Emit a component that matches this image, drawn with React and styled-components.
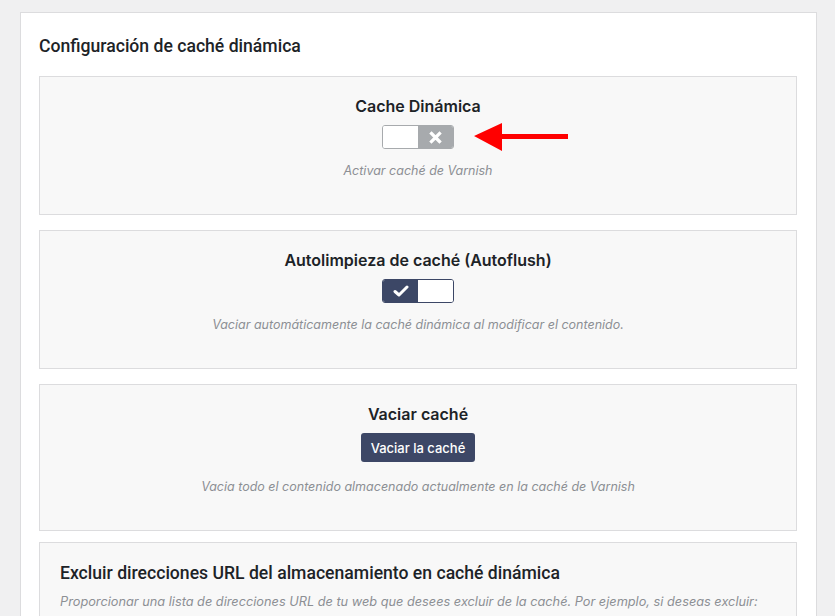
import React from "react";
import styled, { createGlobalStyle } from "styled-components";

const Global = createGlobalStyle`
  html, body { margin: 0; padding: 0; background: #f0f0f1; }
  body { font-family: Inter, "Noto Sans", "Liberation Sans", sans-serif; color: #1d2327; }
`;

const Page = styled.div`
  padding: 12px 18px 0 20px;
  height: 616px;
  box-sizing: border-box;
  overflow: hidden;
`;

const Panel = styled.section`
  background: #fff;
  border: 1px solid #dcdcde;
  padding: 22px 19px 20px 18px;
  display: flex;
  flex-direction: column;
  gap: 15px;
`;

const PanelTitle = styled.h2`
  margin: 0 0 4px;
  font-family: Roboto, "Liberation Sans", sans-serif;
  font-weight: 500;
  font-size: 17.6px;
  line-height: 22px;
  color: #1d2327;
`;

const Card = styled.div`
  position: relative;
  background: #f8f8f8;
  border: 1px solid #dcdcde;
  padding: ${(p) => (p.$left ? "20px 20px 20px 20px" : "20px 20px 34px")};
  display: flex;
  flex-direction: column;
  align-items: ${(p) => (p.$left ? "flex-start" : "center")};
  margin-top: ${(p) => p.$mt || 0}px;
`;

const CardTitle = styled.h3`
  margin: 0;
  font-size: 16px;
  line-height: 19px;
  font-weight: 600;
  color: #1d2327;
`;

const LeftTitle = styled.h3`
  margin: 0;
  font-family: Roboto, "Liberation Sans", sans-serif;
  font-weight: 500;
  font-size: 17.6px;
  line-height: 20px;
  color: #1d2327;
`;

const Desc = styled.p`
  margin: ${(p) => p.$mt || 13}px 0 0;
  font-size: ${(p) => p.$fs || 12.5}px;
  line-height: ${(p) => p.$lh || 18}px;
  font-style: italic;
  color: #8c8f94;
  text-align: ${(p) => (p.$left ? "left" : "center")};
`;

const Toggle = styled.div`
  margin-top: 9px;
  width: 72px;
  height: 24px;
  box-sizing: border-box;
  border: 1px solid ${(p) => (p.$on ? "#3c4766" : "#a7aaad")};
  border-radius: 3px;
  display: flex;
  overflow: hidden;
  background: #fff;
`;

const Half = styled.span`
  flex: 1;
  display: flex;
  align-items: center;
  justify-content: center;
  background: ${(p) => p.$bg || "#fff"};
`;

const Button = styled.button`
  margin-top: 9px;
  height: 29px;
  padding: 0 10px;
  border: none;
  border-radius: 3px;
  background: #3d4766;
  color: #fff;
  font-family: Inter, "Noto Sans", sans-serif;
  font-size: 13px;
  font-weight: 500;
  cursor: pointer;
`;

const Arrow = styled.svg`
  position: absolute;
  left: 434px;
  top: 45px;
`;

const XIcon = () => (
  <svg width="13" height="13" viewBox="0 0 13 13">
    <path d="M2.5 2.5 L10.5 10.5 M10.5 2.5 L2.5 10.5" stroke="#fff" strokeWidth="3.2" strokeLinecap="square" />
  </svg>
);

const CheckIcon = () => (
  <svg width="16" height="12" viewBox="0 0 16 12">
    <path d="M2 6.5 L6 10 L14 2" stroke="#fff" strokeWidth="3" fill="none" strokeLinecap="round" strokeLinejoin="round" />
  </svg>
);

export default function App() {
  return (
    <>
      <Global />
      <Page>
        <Panel>
          <PanelTitle>Configuración de caché dinámica</PanelTitle>
          <Card>
            <CardTitle>Cache Dinámica</CardTitle>
            <Toggle>
              <Half />
              <Half $bg="#a7aaad"><XIcon /></Half>
            </Toggle>
            <Desc>Activar caché de Varnish</Desc>
            <Arrow width="96" height="30" viewBox="0 0 96 30">
              <polygon points="0,14 28,1 28,12 94,12 94,17 28,17 28,29" fill="#ff0000" />
            </Arrow>
          </Card>
          <Card>
            <CardTitle>Autolimpieza de caché (Autoflush)</CardTitle>
            <Toggle $on>
              <Half $bg="#3c4766"><CheckIcon /></Half>
              <Half />
            </Toggle>
            <Desc>Vaciar automáticamente la caché dinámica al modificar el contenido.</Desc>
          </Card>
          <Card>
            <CardTitle>Vaciar caché</CardTitle>
            <Button>Vaciar la caché</Button>
            <Desc $mt={16}>Vacia todo el contenido almacenado actualmente en la caché de Varnish</Desc>
          </Card>
          <Card $left $mt={-4}>
            <LeftTitle>Excluir direcciones URL del almacenamiento en caché dinámica</LeftTitle>
            <Desc $left $mt={8} $lh={21} $fs={12.75}>
              Proporcionar una lista de direcciones URL de tu web que desees excluir de la caché. Por ejemplo, si deseas excluir: http://dominio.com/path/to/url Puedes escribir simplemente la cadena "path" de la URL. Esto excluirá de la caché todas las direcciones que contengan dicha cadena.
            </Desc>
          </Card>
        </Panel>
      </Page>
    </>
  );
}
